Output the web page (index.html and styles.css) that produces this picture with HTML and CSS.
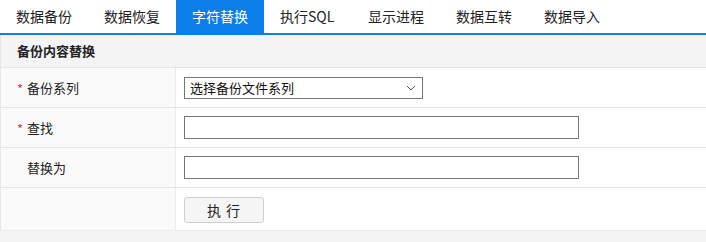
FILE: index.html
```html
<!DOCTYPE html>
<html lang="zh">
<head>
<meta charset="utf-8">
<link rel="stylesheet" href="styles.css">
</head>
<body>
<div class="tabs">
  <div class="tab">数据备份</div>
  <div class="tab">数据恢复</div>
  <div class="tab active">字符替换</div>
  <div class="tab">执行SQL</div>
  <div class="tab">显示进程</div>
  <div class="tab">数据互转</div>
  <div class="tab">数据导入</div>
</div>
<div class="panel">
  <div class="panel-head">备份内容替换</div>
  <div class="row">
    <div class="label"><span class="req">*</span>备份系列</div>
    <div class="field">
      <div class="select"><span>选择备份文件系列</span>
        <svg class="caret" width="10" height="6" viewBox="0 0 10 6"><path d="M1 1 L5 5 L9 1" fill="none" stroke="#555" stroke-width="1"/></svg>
      </div>
    </div>
  </div>
  <div class="row">
    <div class="label"><span class="req">*</span>查找</div>
    <div class="field"><div class="input"></div></div>
  </div>
  <div class="row">
    <div class="label"><span class="req blank"></span>替换为</div>
    <div class="field"><div class="input"></div></div>
  </div>
  <div class="row last">
    <div class="label"></div>
    <div class="field"><div class="btn">执&nbsp;行</div></div>
  </div>
</div>
</body>
</html>
```
FILE: styles.css
```css
html, body {
  margin: 0;
  padding: 0;
  background: #f4f4f4;
  font-family: "Noto Sans CJK SC", "Noto Sans", sans-serif;
  color: #222;
}
.tabs {
  display: flex;
  height: 33px;
  background: #fff;
  border-bottom: 2px solid #0b7ee9;
}
.tab {
  padding: 0 16px;
  width: 56px;
  font-size: 14px;
  line-height: 33px;
  white-space: nowrap;
  color: #222;
}
.tab.active {
  background: #0b7ee9;
  color: #fff;
}
.panel {
  border-left: 1px solid #e6e6e6;
  background: #fff;
}
.panel-head {
  height: 32px;
  line-height: 32px;
  padding-left: 16px;
  font-size: 13px;
  font-weight: bold;
  background: #f4f4f4;
  border-bottom: 1px solid #e4e4e4;
}
.row {
  display: grid;
  grid-template-columns: 175px 1fr;
  height: 39px;
  border-bottom: 1px solid #e6e6e6;
}
.row.last {
  height: 42px;
  border-bottom: 1px solid #ececec;
}
.label {
  display: flex;
  align-items: center;
  padding-left: 16px;
  font-size: 13px;
  background: #fafafa;
  border-right: 1px solid #eaeaea;
}
.req {
  color: #e4393c;
  width: 10px;
  font-size: 13px;
  position: relative;
  top: 1px;
}
.field {
  display: flex;
  align-items: center;
  padding-left: 8px;
}
.select {
  box-sizing: border-box;
  width: 239px;
  height: 22px;
  border: 1px solid #767676;
  display: flex;
  align-items: center;
  justify-content: space-between;
  padding: 0 6px 0 5px;
  font-size: 13px;
  color: #111;
}
.caret {
  display: block;
}
.input {
  box-sizing: border-box;
  width: 395px;
  height: 23px;
  border: 1px solid #767676;
  background: #fff;
}
.btn {
  box-sizing: border-box;
  width: 80px;
  height: 26px;
  border: 1px solid #cfcfcf;
  border-radius: 3px;
  background: #f5f5f5;
  font-size: 14px;
  line-height: 24px;
  text-align: center;
  letter-spacing: 1px;
  color: #222;
  margin-top: 2px;
}
```
